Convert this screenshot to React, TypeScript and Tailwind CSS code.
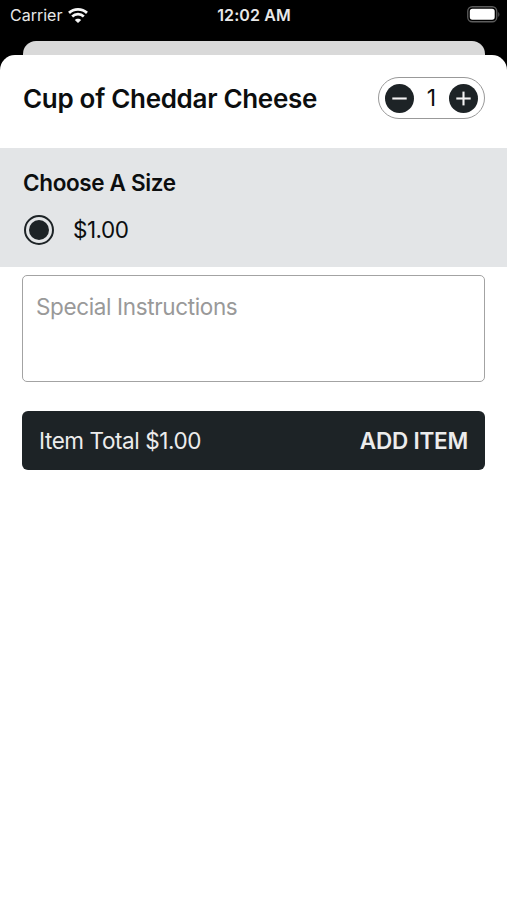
function WifiIcon() {
  return (
    <svg className="h-[15px] w-[20px]" viewBox="0 0 20 15" fill="none">
      <path d="M1 4.9C6 .3 14 .3 19 4.9" stroke="#f5f5f5" strokeWidth="2.8" />
      <path d="M4.2 8.5c3.2-3.1 8.4-3.1 11.6 0" stroke="#f5f5f5" strokeWidth="2.7" />
      <path d="M10 15 6.8 12c1.6-1.7 4.8-1.7 6.4 0Z" fill="#f5f5f5" />
    </svg>
  );
}

function BatteryIcon() {
  return (
    <svg className="h-[17px] w-[33px]" viewBox="0 0 33 17" fill="none">
      <rect x=".75" y=".75" width="29" height="15" rx="4.5" stroke="#5c5c5c" strokeWidth="1.3" />
      <rect x="2.8" y="2.8" width="24.9" height="10.9" rx="2.6" fill="#fff" />
      <path d="M31.3 6v4.8c1.4-.7 1.4-4.1 0-4.8Z" fill="#5c5c5c" />
    </svg>
  );
}

function StatusBar() {
  return (
    <header className="grid h-[41px] grid-cols-3 items-start text-[#e8e8e8]">
      <div className="flex items-center gap-[6px] pl-[10px] pt-[5px] text-[16px] leading-5">
        <span>Carrier</span>
        <WifiIcon />
      </div>
      <div className="whitespace-nowrap pl-px pt-[5px] text-center text-[16px] font-semibold leading-5 tracking-[0.1px]">12:02 AM</div>
      <div className="flex justify-end pr-[7px] pt-[6px]">
        <BatteryIcon />
      </div>
    </header>
  );
}

function StepButton({ label, plus }: { label: string; plus?: boolean }) {
  return (
    <button aria-label={label} className="flex size-[29px] items-center justify-center rounded-full bg-[#1d2326]">
      <svg className="size-[29px]" viewBox="0 0 29 29" stroke="#f3f3f3" strokeWidth="2.1">
        <path d="M7.3 14.5h14.4" />
        {plus && <path d="M14.5 7.6v13.8" />}
      </svg>
    </button>
  );
}

export default function App() {
  return (
    <div className="flex h-[900px] w-[507px] flex-col overflow-hidden bg-black font-['Inter','Liberation_Sans',sans-serif] text-[#0c0e0f]">
      <StatusBar />
      <div className="mx-[22.5px] h-[14px] shrink-0 rounded-t-[13px] bg-[#d9d9d9]" />
      <main className="flex-1 rounded-t-[15px] bg-white">
        <div className="flex h-[93px] items-start justify-between pl-[23px] pr-[22px] pt-[22px]">
          <h1 className="whitespace-nowrap pt-[6px] text-[26px] font-semibold leading-[32px] tracking-[-0.31px]">
            Cup of Cheddar Cheese
          </h1>
          <div className="flex h-[42px] w-[107px] items-center justify-between rounded-full border-[1.5px] border-[#999] px-[6px]">
            <StepButton label="Remove one" />
            <span className="text-[23px]">1</span>
            <StepButton label="Add one" plus />
          </div>
        </div>
        <section className="h-[119px] bg-[#e3e5e7] px-[23px] pt-[21px]">
          <h2 className="text-[22.5px] font-semibold leading-[28px] tracking-[-0.36px]">Choose A Size</h2>
          <label className="mt-[18px] flex items-center gap-[19px] pl-[1px]">
            <span className="flex size-[30px] items-center justify-center rounded-full border-2 border-[#1d2326]">
              <span className="size-[20px] rounded-full bg-[#1d2326]" />
            </span>
            <span className="text-[22.5px] leading-[30px] tracking-[-0.5px]">$1.00</span>
          </label>
        </section>
        <div className="mx-[22px] mt-[8px] h-[107px] rounded-[5px] border-[1.5px] border-[#a3a3a3] px-[13px] pt-[17px] text-[22.5px] leading-[28px] tracking-[-0.37px] text-[#999]">
          Special Instructions
        </div>
        <button className="mx-[22px] mt-[29px] flex h-[59px] w-[463px] items-center justify-between rounded-[6px] bg-[#1d2326] pl-[17px] pr-[17px] text-[22.5px] text-[#ececec]">
          <span className="tracking-[-0.42px]">Item Total $1.00</span>
          <span className="font-semibold tracking-[-0.22px]">ADD ITEM</span>
        </button>
      </main>
    </div>
  );
}
